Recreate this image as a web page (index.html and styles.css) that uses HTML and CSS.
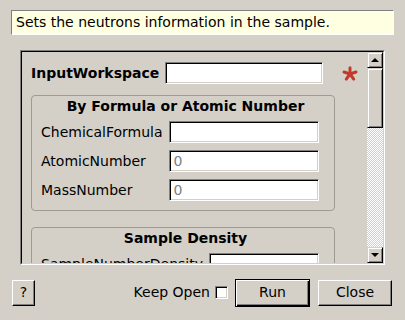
FILE: index.html
```html
<!DOCTYPE html>
<html lang="en">
<head>
    <meta charset="UTF-8">
    <meta name="viewport" content="width=device-width, initial-scale=1.0">
    <title>SetSampleMaterial</title>
    <link rel="stylesheet" href="styles.css">
</head>
<body>
    <div class="dialog">
        <div class="description">Sets the neutrons information in the sample.</div>

        <div class="scroll-frame">
            <div class="scroll-inner">
                <div class="viewport">
                    <div class="row-main">
                        <label class="label-bold" for="input-ws">InputWorkspace</label>
                        <input type="text" id="input-ws" class="field field-main">
                        <svg class="required" width="16" height="16" viewBox="0 0 16 16">
                            <g stroke="#c0392b" stroke-width="3" stroke-linecap="round">
                                <line x1="8" y1="8" x2="8" y2="1.7"/>
                                <line x1="8" y1="8" x2="14" y2="6.05"/>
                                <line x1="8" y1="8" x2="11.7" y2="13.1"/>
                                <line x1="8" y1="8" x2="4.3" y2="13.1"/>
                                <line x1="8" y1="8" x2="2" y2="6.05"/>
                            </g>
                        </svg>
                    </div>

                    <div class="group">
                        <div class="group-title">By Formula or Atomic Number</div>
                        <div class="group-rows">
                            <label for="formula">ChemicalFormula</label>
                            <input type="text" id="formula" class="field">
                            <label for="atomic">AtomicNumber</label>
                            <input type="text" id="atomic" class="field" placeholder="0">
                            <label for="mass">MassNumber</label>
                            <input type="text" id="mass" class="field" placeholder="0">
                        </div>
                    </div>

                    <div class="group">
                        <div class="group-title">Sample Density</div>
                        <div class="group-rows">
                            <label for="density">SampleNumberDensity</label>
                            <input type="text" id="density" class="field">
                        </div>
                    </div>
                </div>

                <div class="scrollbar">
                    <div class="sb-button"><span class="arrow-up"></span></div>
                    <div class="sb-thumb"></div>
                    <div class="sb-track"></div>
                    <div class="sb-button"><span class="arrow-down"></span></div>
                </div>
            </div>
        </div>

        <div class="footer">
            <button class="btn btn-help">?</button>
            <label class="keep-open">Keep Open <span class="checkbox"></span></label>
            <button class="btn btn-default">Run</button>
            <button class="btn btn-close">Close</button>
        </div>
    </div>
</body>
</html>
```

FILE: styles.css
```css
body {
    margin: 0;
    background: #d4d0c8;
    font-family: "DejaVu Sans", Verdana, sans-serif;
    font-size: 14px;
    line-height: 17px;
    color: #000;
}

.dialog {
    width: 405px;
    height: 320px;
    display: flex;
    flex-direction: column;
    overflow: hidden;
}

.description {
    margin: 10px 11px 0 11px;
    height: 23px;
    padding: 0 4px;
    background: #ffffe1;
    border: 1px solid;
    border-color: #808080 #fff #fff #808080;
    display: flex;
    align-items: center;
}

/* sunken 2px frame round the scroll area */
.scroll-frame {
    margin: 15px 0 0 20px;
    width: 363px;
    height: 213px;
    border: 1px solid;
    border-color: #808080 #fff #fff #808080;
}

.scroll-inner {
    height: 211px;
    border: 1px solid;
    border-color: #000 #d4d0c8 #d4d0c8 #000;
    display: flex;
}

.viewport {
    width: 345px;
    overflow: hidden;
    padding: 0 0 0 9px;
    box-sizing: border-box;
}

.row-main {
    display: flex;
    align-items: center;
    margin-top: 10px;
    height: 22px;
}

.label-bold {
    font-weight: bold;
    width: 134px;
    flex: none;
}

.field {
    box-sizing: border-box;
    height: 22px;
    margin: 0;
    padding: 0 4px;
    border: 1px solid;
    border-color: #808080 #fff #fff #808080;
    box-shadow: inset 1px 1px #000, inset -1px -1px #d4d0c8;
    background: #fff;
    font: inherit;
    outline: none;
    min-width: 0;
}

.field::placeholder {
    color: #808080;
}

.field-main {
    width: 158px;
    flex: none;
}

.required {
    margin-left: 19px;
    margin-top: 2px;
}

.group {
    width: 304px;
    box-sizing: border-box;
    margin-top: 11px;
    border: 1px solid #9e9b94;
    border-radius: 4px;
    padding: 2px 15px 9px 9px;
}

.group + .group {
    margin-top: 16px;
}

.group-title {
    font-weight: bold;
    text-align: center;
    margin: 0 -15px 0 -4px;
}

.group-rows {
    margin-top: 6px;
    display: grid;
    grid-template-columns: auto 1fr;
    column-gap: 6px;
    row-gap: 7px;
    align-items: center;
}

.scrollbar {
    width: 16px;
    display: flex;
    flex-direction: column;
}

.sb-button,
.sb-thumb {
    box-sizing: border-box;
    border: 1px solid;
    border-color: #d4d0c8 #000 #000 #d4d0c8;
    box-shadow: inset 1px 1px #fff, inset -1px -1px #808080;
    background: #d4d0c8;
}

.sb-button {
    height: 16px;
    display: flex;
    align-items: center;
    justify-content: center;
}

.sb-thumb {
    height: 60px;
}

.sb-track {
    flex: 1;
    background: repeating-conic-gradient(#fff 0 25%, #d4d0c8 0 50%) 0 0 / 2px 2px;
}

.arrow-up,
.arrow-down {
    width: 0;
    height: 0;
    border-left: 4px solid transparent;
    border-right: 4px solid transparent;
}

.arrow-up {
    border-bottom: 4px solid #000;
}

.arrow-down {
    border-top: 4px solid #000;
}

.footer {
    flex: 1;
    display: flex;
    align-items: center;
    padding: 0 0 0 12px;
}

.btn {
    box-sizing: border-box;
    height: 26px;
    margin: 0;
    padding: 0;
    font: inherit;
    color: #000;
    background: #d4d0c8;
    border: 1px solid;
    border-color: #fff #000 #000 #fff;
    box-shadow: inset -1px -1px #808080;
}

.btn-help {
    width: 23px;
}

.keep-open {
    margin-left: auto;
    display: flex;
    align-items: center;
    gap: 5px;
}

.checkbox {
    box-sizing: border-box;
    width: 13px;
    height: 13px;
    background: #fff;
    border: 1px solid;
    border-color: #808080 #fff #fff #808080;
    box-shadow: inset 1px 1px #000, inset -1px -1px #d4d0c8;
}

.btn-default {
    width: 75px;
    height: 28px;
    margin-left: 7px;
    border: 1px solid #000;
    box-shadow: inset 1px 1px #fff, inset -1px -1px #000, inset -2px -2px #808080;
}

.btn-close {
    width: 74px;
    margin: 0 13px 0 8px;
}
```
